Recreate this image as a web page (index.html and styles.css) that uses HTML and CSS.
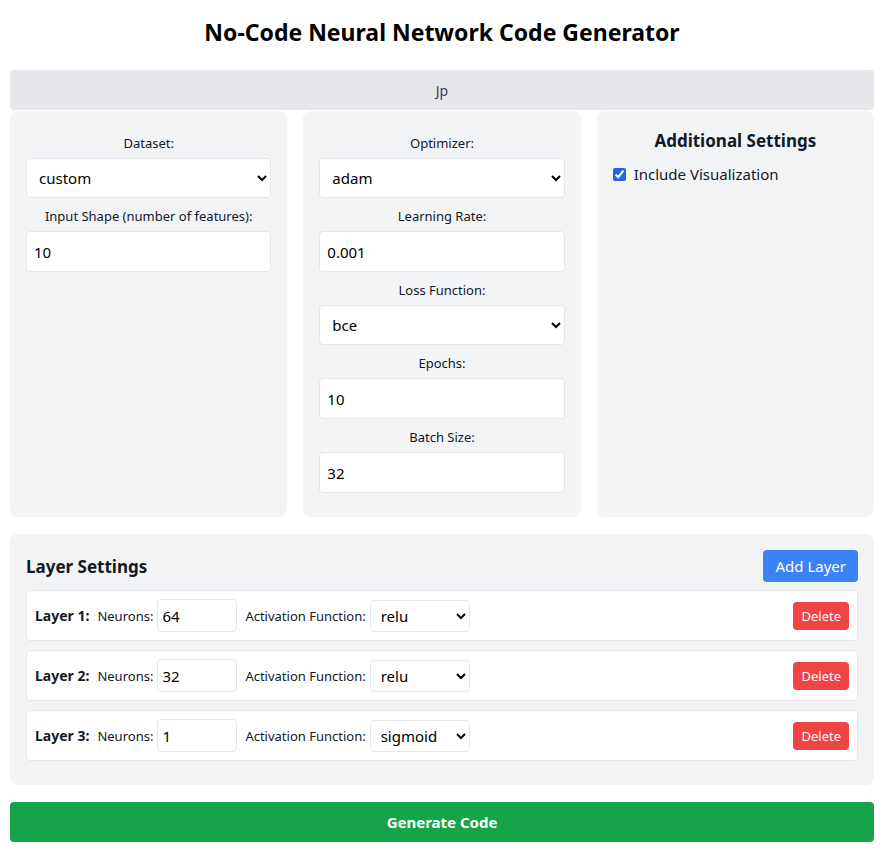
FILE: index.html
```html
<!DOCTYPE html>
<html lang="en">
<head>
<meta charset="utf-8">
<title>No-Code Neural Network Code Generator</title>
<link rel="stylesheet" href="styles.css">
</head>
<body>
<div class="page">
  <h1 class="title">No-Code Neural Network Code Generator</h1>
  <div class="tabbar">Jp</div>
  <div class="panels">
    <div class="panel">
      <div class="field">
        <label class="field-label">Dataset:</label>
        <select class="control">
          <option>custom</option>
          <option>mnist</option>
          <option>cifar10</option>
        </select>
      </div>
      <div class="field">
        <label class="field-label">Input Shape (number of features):</label>
        <input class="control" type="text" value="10">
      </div>
    </div>
    <div class="panel">
      <div class="field">
        <label class="field-label">Optimizer:</label>
        <select class="control">
          <option>adam</option>
          <option>sgd</option>
          <option>rmsprop</option>
        </select>
      </div>
      <div class="field">
        <label class="field-label">Learning Rate:</label>
        <input class="control" type="text" value="0.001">
      </div>
      <div class="field">
        <label class="field-label">Loss Function:</label>
        <select class="control">
          <option>bce</option>
          <option>mse</option>
          <option>cce</option>
        </select>
      </div>
      <div class="field">
        <label class="field-label">Epochs:</label>
        <input class="control" type="text" value="10">
      </div>
      <div class="field">
        <label class="field-label">Batch Size:</label>
        <input class="control" type="text" value="32">
      </div>
    </div>
    <div class="panel">
      <h2 class="panel-title">Additional Settings</h2>
      <label class="check">
        <input type="checkbox" class="check-box" checked>
        <span>Include Visualization</span>
      </label>
    </div>
  </div>

  <div class="layers">
    <div class="layers-head">
      <h2 class="layers-title">Layer Settings</h2>
      <button class="btn btn-blue">Add Layer</button>
    </div>
    <div class="layer">
      <span class="layer-name">Layer 1:</span>
      <span class="layer-label">Neurons:</span>
      <input class="layer-input" type="text" value="64">
      <span class="layer-label act">Activation Function:</span>
      <select class="layer-select">
        <option>relu</option><option>sigmoid</option><option>tanh</option>
      </select>
      <button class="btn btn-red">Delete</button>
    </div>
    <div class="layer">
      <span class="layer-name">Layer 2:</span>
      <span class="layer-label">Neurons:</span>
      <input class="layer-input" type="text" value="32">
      <span class="layer-label act">Activation Function:</span>
      <select class="layer-select">
        <option>relu</option><option>sigmoid</option><option>tanh</option>
      </select>
      <button class="btn btn-red">Delete</button>
    </div>
    <div class="layer">
      <span class="layer-name">Layer 3:</span>
      <span class="layer-label">Neurons:</span>
      <input class="layer-input" type="text" value="1">
      <span class="layer-label act">Activation Function:</span>
      <select class="layer-select">
        <option>sigmoid</option><option>relu</option><option>tanh</option>
      </select>
      <button class="btn btn-red">Delete</button>
    </div>
  </div>

  <button class="generate">Generate Code</button>
</div>
</body>
</html>
```

FILE: styles.css
```css
* { box-sizing: border-box; }

body {
  margin: 0;
  background: #ffffff;
  font-family: "Noto Sans", "Open Sans", sans-serif;
  color: #111827;
}

.page {
  padding: 0 7px 0 10px;
}

.title {
  margin: 0;
  padding-top: 16px;
  height: 70px;
  line-height: 32px;
  font-size: 23px;
  font-weight: 700;
  text-align: center;
  color: #000;
}

.tabbar {
  height: 40px;
  background: #e5e7eb;
  border-radius: 4px;
  display: flex;
  align-items: center;
  justify-content: center;
  font-size: 14px;
  color: #374151;
}

.panels {
  margin-top: 1px;
  display: grid;
  grid-template-columns: repeat(3, 1fr);
  gap: 16px;
}

.panel {
  background: #f3f4f6;
  border-radius: 8px;
  padding: 22px 16px 16px;
  min-height: 406px;
}

.field {
  display: flex;
  flex-direction: column;
  margin-bottom: 8px;
}

.field-label {
  font-size: 13px;
  line-height: 21px;
  text-align: center;
  margin-bottom: 4px;
  color: #111827;
}

.control {
  height: 41px;
  width: 100%;
  border: 1px solid #e5e7eb;
  border-radius: 4px;
  background: #fff;
  font-family: inherit;
  font-size: 15px;
  color: #000;
  padding: 0 7px;
}

select.control {
  height: 40px;
  padding-left: 8px;
}

.panel-title {
  margin: -4px 0 10px;
  font-size: 17px;
  line-height: 24px;
  font-weight: 700;
  text-align: center;
}

.check {
  display: flex;
  align-items: center;
  gap: 8px;
  font-size: 15px;
  line-height: 22px;
}

.check-box {
  margin: 0;
  width: 13px;
  height: 13px;
  accent-color: #2563eb;
}

.layers {
  margin-top: 17px;
  background: #f3f4f6;
  border-radius: 8px;
  padding: 16px 16px 15px;
}

.layers-head {
  display: flex;
  align-items: center;
  justify-content: space-between;
  margin-bottom: 8px;
}

.layers-title {
  margin: 0;
  font-size: 17px;
  font-weight: 700;
}

.btn {
  border: none;
  border-radius: 4px;
  color: #fff;
  font-family: inherit;
  cursor: pointer;
}

.btn-blue {
  background: #3b82f6;
  height: 32px;
  padding: 0 12px;
  font-size: 15px;
}

.btn-red {
  margin-left: auto;
  background: #ef4444;
  height: 28px;
  padding: 0 8px;
  font-size: 13px;
}

.layer {
  display: flex;
  align-items: center;
  background: #fff;
  border: 1px solid #e5e7eb;
  border-radius: 4px;
  height: 51px;
  padding: 0 8px;
  margin-bottom: 9px;
}

.layer-name {
  font-weight: 700;
  font-size: 14px;
  margin-right: 8px;
}

.layer-label {
  font-size: 13px;
  margin-right: 4px;
}

.layer-label.act {
  margin-left: 8px;
  margin-right: 4px;
}

.layer-input {
  width: 80px;
  height: 33px;
  border: 1px solid #e5e7eb;
  border-radius: 4px;
  font-family: inherit;
  font-size: 15px;
  padding: 0 4px;
}

.layer-select {
  width: 100px;
  height: 32px;
  border: 1px solid #e5e7eb;
  border-radius: 4px;
  font-family: inherit;
  font-size: 15px;
  padding: 0 6px;
  background: #fff;
}

.generate {
  display: block;
  width: 100%;
  margin-top: 17px;
  height: 40px;
  border: none;
  border-radius: 4px;
  background: #16a34a;
  color: #fff;
  font-family: inherit;
  font-weight: 700;
  font-size: 15px;
}
```
